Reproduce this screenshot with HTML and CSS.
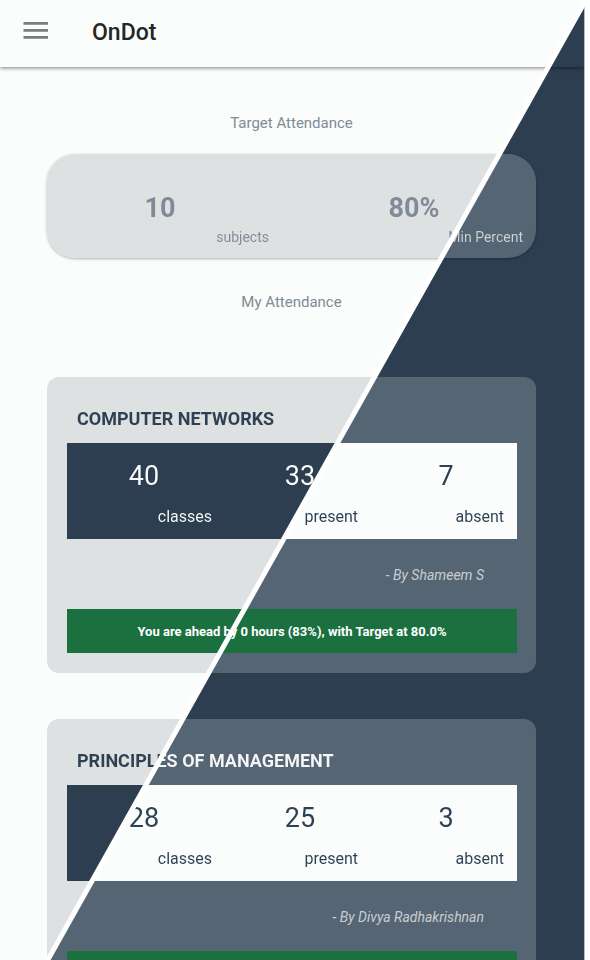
FILE: index.html
```html
<!DOCTYPE html>
<html lang="en">
<head>
<meta charset="utf-8">
<meta name="viewport" content="width=device-width, initial-scale=1">
<title>OnDot</title>
<link rel="stylesheet" href="styles.css">
</head>
<body>
<div class="app">
  <header class="appbar">
    <button class="menu" type="button" aria-label="Menu">
      <svg width="26" height="20" viewBox="0 0 26 20" aria-hidden="true">
        <path d="M0.5 2.4H25M0.5 9.4H25M0.5 16.4H25" fill="none" stroke="#7b7c7c" stroke-width="2.6"/>
      </svg>
    </button>
    <h1 class="brand">OnDot</h1>
  </header>
  <main class="content">
    <h2 class="section">Target Attendance</h2>
    <dl class="target">
      <div class="stat"><dd class="goal muted">10</dd><dt class="goal-label muted">subjects</dt></div>
      <div class="stat"><dd class="goal muted">80%</dd><dt class="goal-label muted">Min Percent</dt></div>
    </dl>
    <h2 class="section">My Attendance</h2>
    <div class="courses">
      <article class="course">
        <h3 class="course-title">COMPUTER NETWORKS</h3>
        <dl class="panel">
          <div class="stat"><dd class="count">40</dd><dt class="count-label">classes</dt></div>
          <div class="stat"><dd class="count">33</dd><dt class="count-label">present</dt></div>
          <div class="stat"><dd class="count">7</dd><dt class="count-label">absent</dt></div>
        </dl>
        <p class="author">- By Shameem S</p>
        <p class="status">You are ahead by 0 hours (83%), with Target at 80.0%</p>
      </article>
      <article class="course">
        <h3 class="course-title">PRINCIPLES OF MANAGEMENT</h3>
        <dl class="panel">
          <div class="stat"><dd class="count">28</dd><dt class="count-label">classes</dt></div>
          <div class="stat"><dd class="count">25</dd><dt class="count-label">present</dt></div>
          <div class="stat"><dd class="count">3</dd><dt class="count-label">absent</dt></div>
        </dl>
        <p class="author">- By Divya Radhakrishnan</p>
        <p class="status"></p>
      </article>
    </div>
  </main>
</div>
<div class="divider" aria-hidden="true"></div>
</body>
</html>
```
FILE: styles.css
```css
/* Each themed surface paints one window-wide diagonal split:
   --day on the left of the line, --night on the right. */
:root {
  --angle: 119.27deg;
  --line: calc(50% + 19px);
  --paper: #fbfdfc;
  --navy: #2d3e50;
}

* { box-sizing: border-box; margin: 0; }

body {
  height: 100vh;
  overflow: hidden;
  padding-right: 5px;
  background: #fff;
  font-family: Roboto, "Liberation Sans", sans-serif;
}

.app, .appbar, .target, .course, .panel,
.muted, .course-title, .count, .count-label {
  background-image: linear-gradient(var(--angle), var(--day) var(--line), var(--night) var(--line));
  background-attachment: fixed;
}

.app {
  --day: var(--paper);
  --night: var(--navy);
  height: 100vh;
  overflow: hidden;
  border-right: 1px solid #b4bac0;
}

.appbar {
  display: flex;
  align-items: center;
  height: 67px;
  padding: 0 23px 6px;
  gap: 43px;
  box-shadow: 0 1px 4px rgba(0, 0, 0, .5);
}

.menu {
  display: flex;
  padding: 0;
  border: 0;
  background: none;
}

.brand {
  padding-top: 4px;
  color: #242626;
  font-size: 23px;
  font-weight: 500;
  line-height: 28px;
}

.content { padding: 46px 48px 0 47px; }

.section {
  color: #808b96;
  font-size: 15px;
  font-weight: 400;
  line-height: 20px;
  text-align: center;
}

.target {
  --day: #dee1e2;
  --night: #566573;
  display: grid;
  grid-template-columns: 1fr 1fr;
  gap: 36px;
  margin: 21px 0 34px;
  padding: 36px 13px 11px 4px;
  border-radius: 28px;
  box-shadow: 0 1px 3px rgba(0, 0, 0, .3);
}

.stat { display: flex; flex-direction: column; }

.muted, .course-title, .count, .count-label {
  -webkit-background-clip: text;
  background-clip: text;
  -webkit-text-fill-color: transparent;
}

.muted {
  --day: #808b96;
  --night: #cfd3d7;
  color: #808b96;
}

.goal {
  font-size: 27px;
  font-weight: 700;
  line-height: 36px;
  text-align: center;
}

.goal-label {
  padding-top: 1px;
  font-size: 14px;
  line-height: 20px;
  text-align: right;
}

.courses {
  display: grid;
  gap: 46px;
  margin-top: 65px;
}

.course {
  --day: #dee1e2;
  --night: #566573;
  padding: 30px 19px 20px 20px;
  border-radius: 12px;
}

.course-title {
  --day: #2e4053;
  --night: #f4f6f7;
  padding-left: 10px;
  color: #2e4053;
  font-size: 18px;
  font-weight: 700;
  line-height: 24px;
}

.panel {
  --day: var(--navy);
  --night: var(--paper);
  display: grid;
  grid-template-columns: 136fr 116fr 116fr;
  gap: 30px;
  margin-top: 12px;
  padding: 15px 13px 11px 9px;
}

.count, .count-label {
  --day: #fbfdfc;
  --night: #2e4053;
  color: #2e4053;
}

.count {
  font-size: 27px;
  line-height: 36px;
  text-align: center;
}

.count-label {
  padding-top: 12px;
  font-size: 16px;
  line-height: 22px;
  text-align: right;
}

.author {
  padding: 26px 33px 24px 0;
  color: #c9cdd1;
  font-size: 14px;
  font-style: italic;
  line-height: 20px;
  text-align: right;
}

.status {
  min-height: 44px;
  padding: 13px 12px 11px;
  background: #1b7040;
  color: #fff;
  font-size: 13px;
  font-weight: 700;
  line-height: 20px;
  text-align: center;
}

.divider {
  position: fixed;
  inset: 0;
  background: linear-gradient(var(--angle),
    transparent calc(var(--line) - 3px), #fff calc(var(--line) - 2px),
    #fff calc(var(--line) + 2px), transparent calc(var(--line) + 3px));
  pointer-events: none;
}
```
